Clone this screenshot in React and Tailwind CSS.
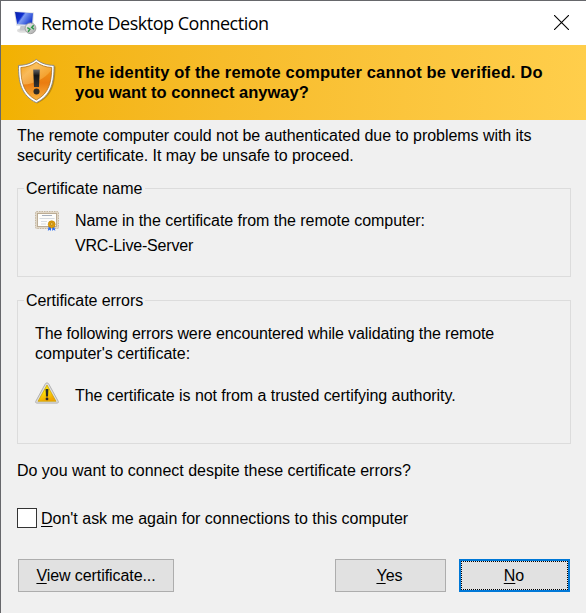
function RemoteDesktopIcon() {
  return (
    <svg width="24" height="26" viewBox="0 0 24 26" className="shrink-0">
      <defs>
        <linearGradient id="screen" x1="0" y1="0" x2="1" y2="0.5">
          <stop offset="0" stopColor="#0a1fa6" />
          <stop offset="0.42" stopColor="#1030d0" />
          <stop offset="0.52" stopColor="#7d9bf2" />
          <stop offset="1" stopColor="#1c3fd0" />
        </linearGradient>
        <linearGradient id="globe" x1="0" y1="0" x2="1" y2="1">
          <stop offset="0" stopColor="#f5f5f5" />
          <stop offset="1" stopColor="#a5a5a5" />
        </linearGradient>
      </defs>
      <ellipse cx="9.500" cy="20.500" rx="5.500" ry="2.300" fill="#dedede" />
      <path d="M7.500 16h5l1 4.500h-7z" fill="#c3c6ca" />
      <path d="M1 1.200 21 2.400 20 16.200 3.300 15.800z" fill="#d9dde6" />
      <path d="M2 2 20 3.300 19 14.800 4.200 14.300z" fill="url(#screen)" />
      <circle cx="17.500" cy="18.300" r="5.400" fill="url(#globe)" stroke="#939393" strokeWidth=".8" />
      <path d="m14.300 17.600 2.600 1.600-1.800 2.600M20.700 15.300l-2 2.200 2.300 1.700" fill="none" stroke="#2b9a45" strokeWidth="1.400" />
    </svg>
  );
}

function ShieldIcon() {
  return (
    <svg width="40" height="48" viewBox="0 0 40 48" className="shrink-0">
      <defs>
        <linearGradient id="shield" x1="0" y1="0" x2="0" y2="1">
          <stop offset="0" stopColor="#f3a01c" />
          <stop offset="0.55" stopColor="#ea7c10" />
          <stop offset="1" stopColor="#fbb340" />
        </linearGradient>
        <linearGradient id="gloss" x1="0" y1="0" x2="1" y2="0.8">
          <stop offset="0" stopColor="#f5a315" />
          <stop offset="0.35" stopColor="#ffd98a" />
          <stop offset="1" stopColor="#f5a020" />
        </linearGradient>
        <linearGradient id="mark" x1="0" y1="0" x2="0" y2="1">
          <stop offset="0" stopColor="#666" />
          <stop offset="0.35" stopColor="#161616" />
          <stop offset="1" stopColor="#333" />
        </linearGradient>
      </defs>
      <path d="M20.300 4C15 8 9.500 9 3 9.500c0 16 2 30 17.300 37C36 39.500 38.500 25.500 38.500 9.500 31 9 25.500 8 20.300 4z" fill="#795000" opacity=".4" />
      <path d="M19.300 2.400C14 6.600 8.500 8.200 1.500 8.400c-.2 16 2.500 30.200 17.800 37.300C34.600 38.600 37.200 24.400 37 8.400 30 8.200 24.600 6.600 19.300 2.400z" fill="#fff" stroke="#858585" strokeWidth=".9" />
      <path d="M19.300 5.200C14.800 8.600 9.800 10.100 3.900 10.500 4 24.900 6.600 36.600 19.300 43 32 36.600 34.600 24.900 34.700 10.500 28.800 10.100 23.800 8.600 19.300 5.200z" fill="url(#shield)" stroke="#ad7220" strokeWidth=".8" />
      <path d="M19.300 5.700C14.800 9 9.800 10.400 4.300 10.900c0 6.500.6 12 2.200 16.700C18 26.900 28 21.400 34 13.400v-2.500C28.800 10.400 23.800 9 19.300 5.700z" fill="url(#gloss)" opacity=".6" />
      <path d="M16.200 12.500h6.600l-.8 17.500h-5z" fill="url(#mark)" />
      <circle cx="19.500" cy="34.500" r="3" fill="#302b25" />
    </svg>
  );
}

function CertificateIcon() {
  return (
    <svg width="24" height="20" viewBox="0 0 24 20" className="shrink-0">
      <rect x=".5" y=".5" width="23" height="17" rx="1" fill="#e0d6c5" stroke="#c4b7a1" strokeDasharray="1.500 1" />
      <rect x="2.500" y="2.500" width="19" height="13" fill="#fdfdfb" stroke="#b5a68e" strokeWidth=".9" />
      <path d="M7 4.500h10" stroke="#a7b0bd" />
      <path d="M4.500 7.500h15M6 10.500h6M6 13h5" stroke="#d3d8df" strokeWidth=".9" />
      <path d="m13.800 15-1 4.700 2-1 1.200 1.200V15zM17.200 15v4.900l1.200-1.200 2 1-1.400-4.700z" fill="#2a6cf0" />
      <circle cx="16.700" cy="13.300" r="3.500" fill="#dd9d0b" stroke="#c08200" strokeWidth=".6" />
      <circle cx="16.700" cy="13" r="1.300" fill="#f5cb55" stroke="#96640a" strokeWidth=".5" />
    </svg>
  );
}

function WarningIcon() {
  return (
    <svg width="24" height="22" viewBox="0 0 24 22" className="shrink-0">
      <defs>
        <linearGradient id="warn" x1="0" y1="0" x2="0.4" y2="1">
          <stop offset="0" stopColor="#eed50c" />
          <stop offset="0.5" stopColor="#ffe008" />
          <stop offset="1" stopColor="#f0a400" />
        </linearGradient>
      </defs>
      <path d="M12 .9c.8 0 1.400.4 1.800 1.200l9.300 17c.6 1.100.2 2-1 2H1.900c-1.200 0-1.600-.9-1-2l9.300-17C10.600 1.300 11.200.9 12 .9z" fill="#dedede" stroke="#ababab" strokeWidth=".9" />
      <path d="M12 3 21 19.300H3z" fill="url(#warn)" stroke="#c9a000" strokeWidth=".7" />
      <path d="M10.600 7h2.800l-.4 7.500h-2z" fill="#292929" />
      <circle cx="12" cy="16.900" r="1.400" fill="#292929" />
    </svg>
  );
}

function Key({ children }) {
  return <span className="underline decoration-1 underline-offset-2">{children}</span>;
}

export default function App() {
  return (
    <div className="flex h-[613px] w-[586px] flex-col overflow-hidden border-l border-t border-[#66676b] bg-[#f0f0f0] font-['Liberation_Sans',Arial,sans-serif] text-[16px] leading-5 whitespace-nowrap text-black">
      <header className="flex h-11 shrink-0 items-center bg-white pl-3">
        <RemoteDesktopIcon />
        <h1 className="ml-1 font-['Open_Sans','Noto_Sans',sans-serif] text-[18px] leading-6 tracking-[-0.49px]">
          Remote Desktop Connection
        </h1>
        <button aria-label="Close" className="mr-[17px] mb-px ml-auto">
          <svg width="15" height="15" viewBox="0 0 15 15" className="block">
            <path d="m0 0 15 15m0-15-15 15" stroke="#000" strokeWidth="1.100" />
          </svg>
        </button>
      </header>

      <section className="flex h-[75px] shrink-0 items-start bg-linear-to-r from-[#f2b100] to-[#ffce4b] pt-3 pl-4">
        <ShieldIcon />
        <p className="mt-[5px] ml-[18px] text-[16.5px] leading-5 font-bold">
          <span className="tracking-[0.16px]">The identity of the remote computer cannot be verified. Do</span>
          <br />
          <span>you want to connect anyway?</span>
        </p>
      </section>

      <main className="flex flex-col pt-1.5 pr-[15px] pl-4">
        <p className="tracking-[-0.045px]">
          The remote computer could not be authenticated due to problems with its
          <br />
          <span className="tracking-[-0.06px]">security certificate. It may be unsafe to proceed.</span>
        </p>

        <fieldset className="mt-3 h-[99px] border border-[#dcdcdc] pl-[6px]">
          <legend className="h-5 px-0.5 leading-[22px]">Certificate name</legend>
          <div className="mt-[13px] ml-[11px] flex gap-4">
            <CertificateIcon />
            <div>
              <p className="tracking-[-0.045px]">Name in the certificate from the remote computer:</p>
              <p className="mt-[5px] tracking-[-0.19px]">VRC-Live-Server</p>
            </div>
          </div>
        </fieldset>

        <fieldset className="mt-[13px] h-[154px] border border-[#dcdcdc] pl-[6px]">
          <legend className="h-5 px-0.5 leading-[22px] tracking-[-0.06px]">Certificate errors</legend>
          <p className="mt-3.5 ml-[11px]">
            <span className="tracking-[-0.12px]">The following errors were encountered while validating the remote</span>
            <br />
            computer's certificate:
          </p>
          <div className="mt-[18px] ml-[11px] flex gap-4">
            <WarningIcon />
            <p className="mt-1 tracking-[-0.055px]">The certificate is not from a trusted certifying authority.</p>
          </div>
        </fieldset>

        <p className="mt-[17px] tracking-[-0.02px]">Do you want to connect despite these certificate errors?</p>

        <label className="mt-[27px] flex items-center gap-1">
          <input type="checkbox" className="size-5 appearance-none border border-[#333] bg-white" />
          <span className="mt-px -mb-px tracking-[-0.01px]">
            <Key>D</Key>on't ask me again for connections to this computer
          </span>
        </label>

        <div className="mt-[31px] mr-px ml-px flex">
          <button className="h-[33px] w-[156px] border border-[#adadad] bg-[#e1e1e1] tracking-[-0.08px]">
            <Key>V</Key>iew certificate...
          </button>
          <button className="ml-auto h-[33px] w-[111px] border border-[#adadad] bg-[#e1e1e1] pr-0.5">
            <Key>Y</Key>es
          </button>
          <button className="ml-[13px] h-[33px] w-[111px] border-2 border-[#0078d7] bg-[#e1e1e1]">
            <span className="flex h-full items-center justify-center border border-dotted border-black pr-px">
              <span>
                <Key>N</Key>o
              </span>
            </span>
          </button>
        </div>
      </main>
    </div>
  );
}
